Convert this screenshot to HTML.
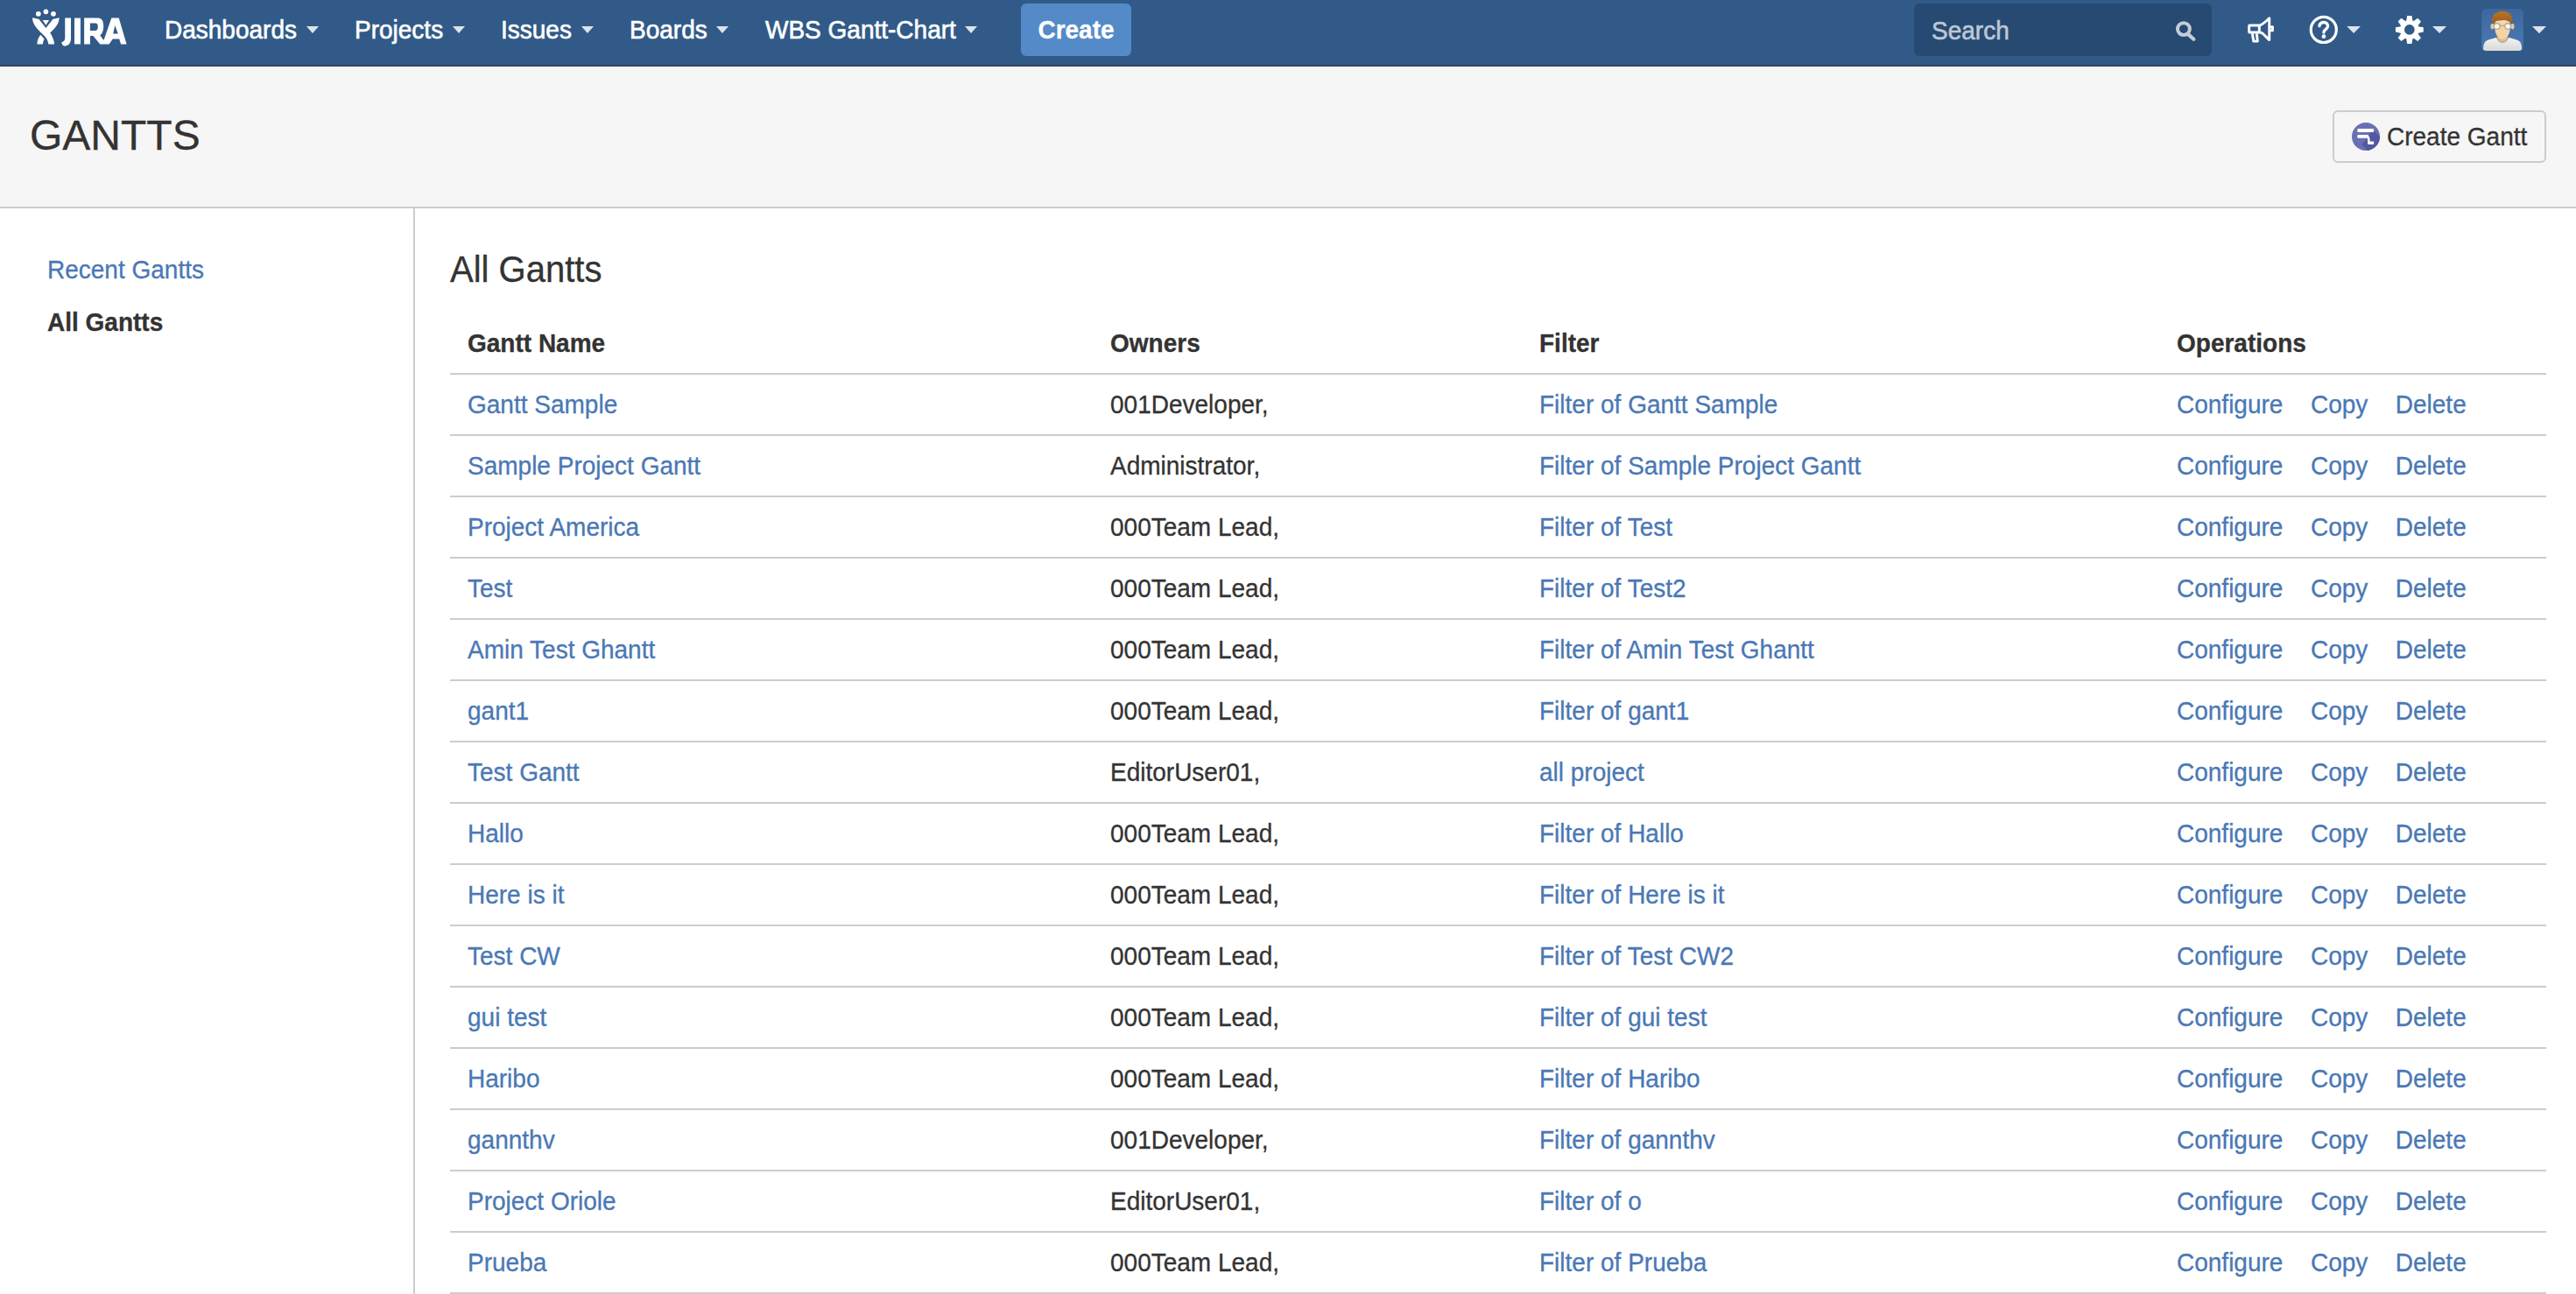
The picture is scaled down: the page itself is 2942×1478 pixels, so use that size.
<!DOCTYPE html>
<html><head><meta charset="utf-8">
<style>
*{box-sizing:border-box;margin:0;padding:0}
html,body{width:2942px;height:1478px;overflow:hidden;background:#fff;font-family:"Liberation Sans",sans-serif;color:#333}
a{text-decoration:none;color:#4a78b5}
#hdr{position:absolute;left:0;top:0;width:2942px;height:76px;background:#315a88;border-bottom:1px solid #2d3852;box-shadow:inset 0 -1px 0 #3b4862}
.nav{position:absolute;top:14px;height:40px;line-height:40px;font-size:28px;color:#fff;white-space:nowrap}
.arr{position:absolute;width:0;height:0;border-left:7.5px solid transparent;border-right:7.5px solid transparent;border-top:8px solid #dde3ec}
#create{position:absolute;left:1166px;top:4px;width:126px;height:60px;background:#548ac7;border-radius:6px;color:#fff;font-size:28px;font-weight:bold;line-height:60px;text-align:center}
#search{position:absolute;left:2186px;top:4px;width:340px;height:60px;background:#264a72;border-radius:6px}
#search > span{position:absolute;left:20px;top:11px;line-height:40px;font-size:28px;color:#bdc7d4}
#phead{position:absolute;left:0;top:76px;width:2942px;height:162px;background:#f6f6f6;border-top:1px solid #fff;border-bottom:2px solid #ccc}
#phead h1{position:absolute;left:34px;top:49px;font-size:48px;font-weight:normal;line-height:60px;color:#333}
#cg{position:absolute;left:2664px;top:49px;width:244px;height:60px;border:2px solid #ccc;border-radius:6px;background:#f6f6f6;font-size:28px;line-height:56px;color:#333}
#side{position:absolute;left:0;top:238px;width:474px;height:1240px;border-right:2px solid #ccc}
.sl{position:absolute;left:54px;font-size:28px;line-height:40px}
#main{position:absolute;left:514px;top:238px}
#main h2{position:absolute;left:0;top:41px;font-size:40px;font-weight:normal;line-height:60px;color:#333;white-space:nowrap}
table{position:absolute;left:514px;top:358px;width:2394px;border-collapse:collapse;font-size:28px;line-height:40px}
th{text-align:left;font-weight:bold;padding:14px 20px;border-bottom:2px solid #ccc;color:#333}
td{padding:14px 20px;border-bottom:2px solid #ccc;white-space:nowrap}
td.ops a{margin-right:31.5px}
.nav .t,#search .t{-webkit-text-stroke:0.6px currentColor}
.t2{display:inline-block;transform:translateY(-1px) scaleY(1.05);transform-origin:0 43.86px;-webkit-text-stroke:0.3px currentColor}
.t1{display:inline-block;transform:translateY(-1px) scaleY(1.0);transform-origin:0 46.6px;-webkit-text-stroke:0.3px currentColor}
.t{display:inline-block;line-height:40px;vertical-align:baseline;transform:translateY(1px) scaleY(1.07);transform-origin:0 29.7px;-webkit-text-stroke:0.3px currentColor}
</style></head><body>
<div id="hdr">
<svg style="position:absolute;left:30px;top:5px" width="120" height="55" viewBox="0 0 2576 1181"><g fill="#fff">
<circle cx="297" cy="233" r="62"/><circle cx="481" cy="180" r="60"/><circle cx="665" cy="233" r="62"/>
<path d="M150,330 L300,358 Q322,366 332,392 L481,580 L630,392 Q640,366 662,358 L810,330 C800,480 710,590 585,700 C640,780 680,880 690,975 L545,975 C530,870 480,800 400,730 C250,590 150,480 150,330Z"/>
<path d="M400,385 L560,385 L481,510Z"/>
<path d="M265,975 C270,880 300,800 350,745 L440,850 C420,890 410,930 405,975Z"/>
<path d="M950,335 L1095,335 L1095,830 C1095,960 1020,1020 930,1020 C900,1020 880,1000 865,925 C910,915 950,890 950,820Z"/>
<path d="M1180,335 L1330,335 L1330,975 L1180,975Z"/>
<path fill-rule="evenodd" d="M1420,335 L1760,335 C1850,335 1895,410 1895,540 C1895,640 1860,720 1810,760 L1900,880 L2090,335 L2270,335 L2460,975 L2320,975 L2280,850 L2120,850 L2030,975 L1810,975 L1640,775 L1565,775 L1565,975 L1420,975Z M1565,460 L1700,460 C1740,460 1755,490 1755,550 C1755,610 1740,645 1700,645 L1565,645Z M2175,515 L2250,720 L2130,720Z"/>
</g></svg>
  <div class="nav" style="left:188px"><span class="t">Dashboards</span></div><div class="arr" style="left:350px;top:30px"></div>
  <div class="nav" style="left:405px"><span class="t">Projects</span></div><div class="arr" style="left:517px;top:30px"></div>
  <div class="nav" style="left:572px"><span class="t">Issues</span></div><div class="arr" style="left:664px;top:30px"></div>
  <div class="nav" style="left:719px"><span class="t">Boards</span></div><div class="arr" style="left:818px;top:30px"></div>
  <div class="nav" style="left:874px"><span class="t">WBS Gantt-Chart</span></div><div class="arr" style="left:1102px;top:30px"></div>
  <div id="create"><span class="t">Create</span></div>
  <div id="search"><span><span class="t">Search</span></span></div>
<svg style="position:absolute;left:2470px;top:10px" width="140" height="48" viewBox="0 0 2576 883">
<circle cx="440" cy="425" r="128" fill="none" stroke="#c3ccd8" stroke-width="74"/>
<path d="M545,545 L650,640" stroke="#c3ccd8" stroke-width="78" stroke-linecap="round"/>
<g fill="none" stroke="#fff" stroke-width="54" stroke-linejoin="round">
<rect x="1815" y="348" width="215" height="150" rx="10"/>
<path d="M2030,348 C2075,345 2110,325 2240,197 L2240,655 L2110,528 C2085,505 2060,498 2030,498"/>
<path d="M2240,382 L2308,382 L2308,458 L2240,458"/>
<path d="M1884,522 L1909,683 L1993,683 L1975,522"/>
</g></svg>
<svg style="position:absolute;left:2625px;top:10px" width="180" height="48" viewBox="0 0 2576 687">
<circle cx="412" cy="343" r="208" fill="none" stroke="#fff" stroke-width="46"/>
<path d="M342,282 C350,242 380,222 415,222 C455,222 480,250 480,283 C480,318 455,330 435,348 C418,362 414,372 414,386" fill="none" stroke="#fff" stroke-width="48" stroke-linecap="round"/>
<circle cx="414" cy="453" r="33" fill="#fff"/>
<path d="M790,285 L1015,285 L903,400Z" fill="#dde3ec"/>
<path fill="#fff" fill-rule="evenodd" d="M1757,203 L1766,182 L1777,115 L1853,115 L1864,182 L1873,203 L1894,195 L1949,155 L2003,209 L1963,264 L1955,285 L1976,294 L2043,305 L2043,381 L1976,392 L1955,401 L1963,422 L2003,477 L1949,531 L1894,491 L1873,483 L1864,504 L1853,571 L1777,571 L1766,504 L1757,483 L1736,491 L1681,531 L1627,477 L1667,422 L1675,401 L1654,392 L1587,381 L1587,305 L1654,294 L1675,285 L1667,264 L1627,209 L1681,155 L1736,195Z M1731,343 a84,84 0 1,0 168,0 a84,84 0 1,0 -168,0Z"/>
<path d="M2190,285 L2420,285 L2305,400Z" fill="#dde3ec"/>
</svg>
<svg style="position:absolute;left:2825px;top:5px" width="100" height="60" viewBox="0 0 2157 1294">
<defs><linearGradient id="avbg" x1="0" y1="0" x2="0" y2="1"><stop offset="0" stop-color="#3d679e"/><stop offset="1" stop-color="#4b7bb6"/></linearGradient>
<linearGradient id="shirt" x1="0" y1="0" x2="0" y2="1"><stop offset="0" stop-color="#f2f2f2"/><stop offset="1" stop-color="#d8d8d8"/></linearGradient>
<linearGradient id="hair" x1="0" y1="0" x2="0" y2="1"><stop offset="0" stop-color="#b8752c"/><stop offset="1" stop-color="#9a5a1c"/></linearGradient>
<filter id="avblur" x="-5%" y="-5%" width="110%" height="110%"><feGaussianBlur stdDeviation="12"/></filter><clipPath id="avclip"><rect x="200" y="110" width="1025" height="1035" rx="120"/></clipPath></defs>
<rect x="200" y="110" width="1025" height="1035" rx="120" fill="url(#avbg)"/>
<g clip-path="url(#avclip)"><g filter="url(#avblur)">
<path d="M235,1145 C240,1000 260,920 340,885 C420,850 500,835 560,820 L870,820 C930,835 1010,850 1090,885 C1170,920 1190,1000 1195,1145Z" fill="url(#shirt)"/>
<path d="M550,815 C590,910 650,955 712,955 C775,955 835,910 875,815Z" fill="#b9b2a4"/>
<path d="M585,770 C600,860 650,905 712,905 C775,905 825,860 840,770Z" fill="#eab887"/>
<path d="M520,520 C520,720 590,860 712,860 C835,860 905,720 905,520 C905,400 820,330 712,330 C605,330 520,400 520,520Z" fill="#f4d3a4"/>
<ellipse cx="462" cy="545" rx="42" ry="68" fill="#e9c896"/><ellipse cx="962" cy="545" rx="42" ry="68" fill="#e9c896"/>
<path d="M452,480 C430,260 540,165 712,165 C885,165 975,260 962,480 C930,430 890,400 850,420 C800,380 720,380 660,400 C600,390 540,410 500,440 C480,450 465,465 452,480Z" fill="url(#hair)"/>
<path d="M630,420 C680,395 740,400 790,440 C740,470 680,470 630,420Z" fill="#f3dcb5"/>
<circle cx="575" cy="540" r="72" fill="#fffaf0" stroke="#b5ab95" stroke-width="30"/>
<circle cx="845" cy="540" r="72" fill="#fffaf0" stroke="#b5ab95" stroke-width="30"/>
<path d="M650,525 L770,525" stroke="#b5ab95" stroke-width="26"/>
</g></g>
<path d="M1445,540 L1790,540 L1617,715Z" fill="#dde3ec"/>
</svg>
</div>
<div id="phead"><h1><span class="t1">GANTTS</span></h1>
<div id="cg"><svg style="position:absolute;left:19px;top:11px" width="34" height="34" viewBox="0 0 34 34">
<defs><filter id="gblur" x="-20%" y="-20%" width="140%" height="140%"><feGaussianBlur stdDeviation="0.35"/></filter><clipPath id="gc"><circle cx="17" cy="17" r="16"/></clipPath></defs>
<circle cx="17" cy="17" r="16" fill="#6b70b2"/>
<path clip-path="url(#gc)" d="M24.5,8.5 L40,24 L40,40 L26,40 L12,26 L19,18.5Z" fill="#5557a0"/>
<g fill="#fff" filter="url(#gblur)">
<rect x="7.3" y="7.9" width="18.8" height="4" rx="1.2"/>
<rect x="7.3" y="15" width="12.6" height="3.8" rx="1.2"/>
<rect x="19" y="22.6" width="7.2" height="3.3" rx="1.2"/>
<path d="M18.2,16.5 L20.6,16.5 Q22,19 21.3,23.5 L19,23.5 Q19.3,19.5 18.2,16.5Z"/>
</g></svg><span style="position:absolute;left:60px;top:0"><span class="t">Create Gantt</span></span></div>
</div>
<div id="side">
  <a class="sl" style="top:50px"><span class="t">Recent Gantts</span></a>
  <div class="sl" style="top:110px;font-weight:bold;color:#333"><span class="t">All Gantts</span></div>
</div>
<div id="main"><h2><span class="t2">All Gantts</span></h2></div>
<table>
<colgroup><col style="width:734px"><col style="width:490px"><col style="width:728px"><col style="width:442px"></colgroup>
<tr><th><span class="t">Gantt Name</span></th><th><span class="t">Owners</span></th><th><span class="t">Filter</span></th><th><span class="t">Operations</span></th></tr>
<tr><td><a class="t">Gantt Sample</a></td><td><span class="t">001Developer,</span></td><td><a class="t">Filter of Gantt Sample</a></td><td class="ops"><a class="t">Configure</a><a class="t">Copy</a><a class="t">Delete</a></td></tr>
<tr><td><a class="t">Sample Project Gantt</a></td><td><span class="t">Administrator,</span></td><td><a class="t">Filter of Sample Project Gantt</a></td><td class="ops"><a class="t">Configure</a><a class="t">Copy</a><a class="t">Delete</a></td></tr>
<tr><td><a class="t">Project America</a></td><td><span class="t">000Team Lead,</span></td><td><a class="t">Filter of Test</a></td><td class="ops"><a class="t">Configure</a><a class="t">Copy</a><a class="t">Delete</a></td></tr>
<tr><td><a class="t">Test</a></td><td><span class="t">000Team Lead,</span></td><td><a class="t">Filter of Test2</a></td><td class="ops"><a class="t">Configure</a><a class="t">Copy</a><a class="t">Delete</a></td></tr>
<tr><td><a class="t">Amin Test Ghantt</a></td><td><span class="t">000Team Lead,</span></td><td><a class="t">Filter of Amin Test Ghantt</a></td><td class="ops"><a class="t">Configure</a><a class="t">Copy</a><a class="t">Delete</a></td></tr>
<tr><td><a class="t">gant1</a></td><td><span class="t">000Team Lead,</span></td><td><a class="t">Filter of gant1</a></td><td class="ops"><a class="t">Configure</a><a class="t">Copy</a><a class="t">Delete</a></td></tr>
<tr><td><a class="t">Test Gantt</a></td><td><span class="t">EditorUser01,</span></td><td><a class="t">all project</a></td><td class="ops"><a class="t">Configure</a><a class="t">Copy</a><a class="t">Delete</a></td></tr>
<tr><td><a class="t">Hallo</a></td><td><span class="t">000Team Lead,</span></td><td><a class="t">Filter of Hallo</a></td><td class="ops"><a class="t">Configure</a><a class="t">Copy</a><a class="t">Delete</a></td></tr>
<tr><td><a class="t">Here is it</a></td><td><span class="t">000Team Lead,</span></td><td><a class="t">Filter of Here is it</a></td><td class="ops"><a class="t">Configure</a><a class="t">Copy</a><a class="t">Delete</a></td></tr>
<tr><td><a class="t">Test CW</a></td><td><span class="t">000Team Lead,</span></td><td><a class="t">Filter of Test CW2</a></td><td class="ops"><a class="t">Configure</a><a class="t">Copy</a><a class="t">Delete</a></td></tr>
<tr><td><a class="t">gui test</a></td><td><span class="t">000Team Lead,</span></td><td><a class="t">Filter of gui test</a></td><td class="ops"><a class="t">Configure</a><a class="t">Copy</a><a class="t">Delete</a></td></tr>
<tr><td><a class="t">Haribo</a></td><td><span class="t">000Team Lead,</span></td><td><a class="t">Filter of Haribo</a></td><td class="ops"><a class="t">Configure</a><a class="t">Copy</a><a class="t">Delete</a></td></tr>
<tr><td><a class="t">gannthv</a></td><td><span class="t">001Developer,</span></td><td><a class="t">Filter of gannthv</a></td><td class="ops"><a class="t">Configure</a><a class="t">Copy</a><a class="t">Delete</a></td></tr>
<tr><td><a class="t">Project Oriole</a></td><td><span class="t">EditorUser01,</span></td><td><a class="t">Filter of o</a></td><td class="ops"><a class="t">Configure</a><a class="t">Copy</a><a class="t">Delete</a></td></tr>
<tr><td><a class="t">Prueba</a></td><td><span class="t">000Team Lead,</span></td><td><a class="t">Filter of Prueba</a></td><td class="ops"><a class="t">Configure</a><a class="t">Copy</a><a class="t">Delete</a></td></tr>
</table>
</body></html>
